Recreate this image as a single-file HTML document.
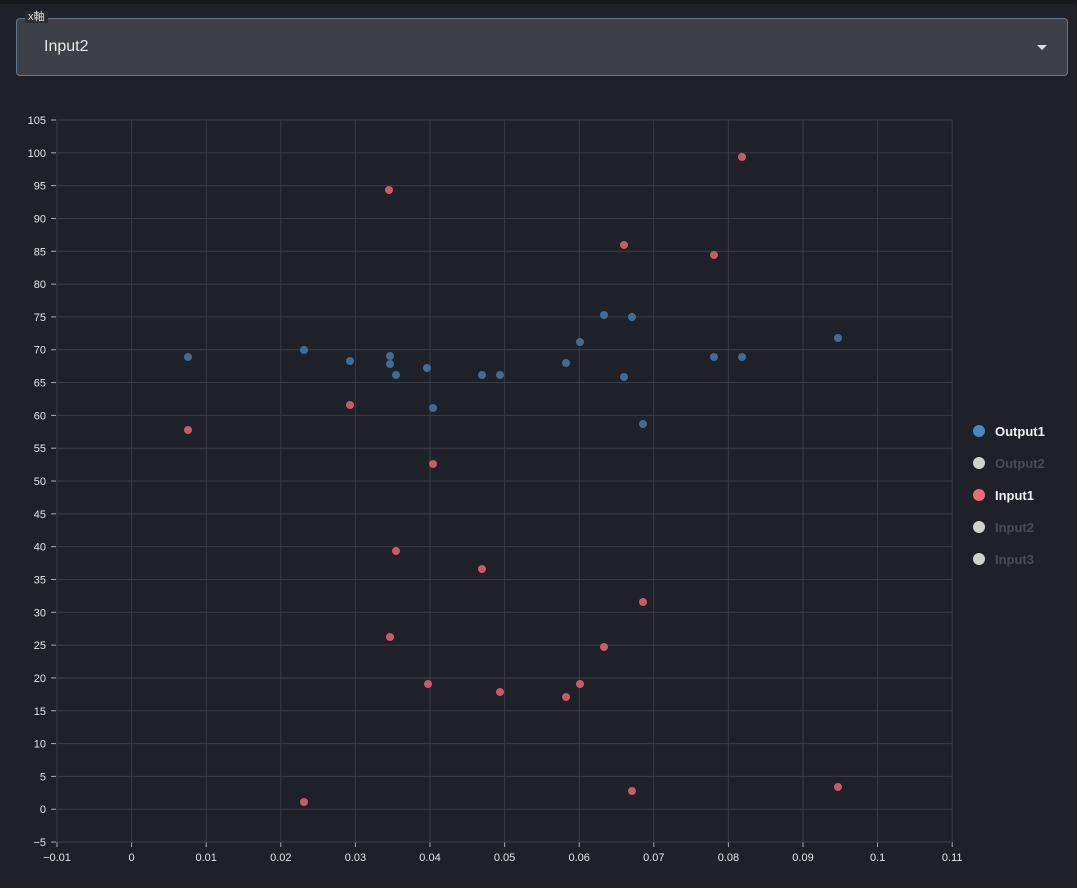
<!DOCTYPE html><html><head><meta charset="utf-8"><style>
body{margin:0;width:1077px;height:888px;background:#1f2129;overflow:hidden;font-family:"Liberation Sans","Noto Sans CJK JP",sans-serif}
.top{position:absolute;left:0;top:0;width:1077px;height:4px;background:#18191d}
.sel{position:absolute;left:16px;top:18px;width:1052px;height:58px;background:#3d4046;border:1px solid #5b7a9c;border-radius:4px;box-sizing:border-box}
.lab{position:absolute;left:25px;top:11px;font-size:11px;color:#ddd;background:#2a2c31;padding:0 3px;line-height:12px}
.val{position:absolute;left:27px;top:19px;font-size:16px;color:#e8e8e8}
.arr{position:absolute;right:20px;top:26px;width:0;height:0;border-left:5px solid transparent;border-right:5px solid transparent;border-top:5px solid #ddd}
</style></head><body><div class="top"></div>
<div class="sel"><div class="val">Input2</div><div class="arr"></div></div><div class="lab">x軸</div>
<svg width="1077" height="888" style="position:absolute;left:0;top:0" font-family="Liberation Sans, sans-serif" font-size="11" fill="#e6e6e6">
<g stroke="#383c46" stroke-width="1" id="g"></g>
<g id="t"></g>
<g id="p"></g>
<g font-size="13" font-weight="bold">
<circle cx="979" cy="431" r="6" fill="#4a86c0"/><text x="995" y="436" fill="#f0f0f0">Output1</text>
<circle cx="979" cy="463" r="6" fill="#d0d0d0"/><text x="995" y="468" fill="#4a4c52">Output2</text>
<circle cx="979" cy="495" r="6" fill="#f06b78"/><text x="995" y="500" fill="#f0f0f0">Input1</text>
<circle cx="979" cy="527" r="6" fill="#d0d0d0"/><text x="995" y="532" fill="#4a4c52">Input2</text>
<circle cx="979" cy="559" r="6" fill="#d0d0d0"/><text x="995" y="564" fill="#4a4c52">Input3</text>
</g>
</svg>
<script>
var ns="http://www.w3.org/2000/svg",g=document.getElementById('g'),t=document.getElementById('t'),p=document.getElementById('p');
function el(par,n,a,txt){var e=document.createElementNS(ns,n);for(var k in a)e.setAttribute(k,a[k]);if(txt!=null)e.textContent=txt;par.appendChild(e);}
for(var i=0;i<=12;i++){var x=57+i*74.6;el(g,'line',{x1:x,y1:120,x2:x,y2:842});el(g,'line',{x1:x,y1:842,x2:x,y2:847,stroke:'#aaa'});
var v=(-0.01+i*0.01);var s=i==1?'0':(Math.round(v*100)/100).toString();el(t,'text',{x:x,y:861,'text-anchor':'middle'},s.replace('-','−'));}
for(var j=0;j<=22;j++){var y=120+j*32.82;el(g,'line',{x1:57,y1:y,x2:952,y2:y});el(g,'line',{x1:51,y1:y,x2:56,y2:y,stroke:'#aaa'});
var v=105-j*5;el(t,'text',{x:46,y:y+4,'text-anchor':'end'},(v+'').replace('-','−'));}
var B=[[188,357],[304,350],[350,361],[390,356],[390,364],[396,375],[427,368],[433,408],[482,375],[500,375],[566,363],[580,342],[604,315],[632,317],[624,377],[643,424],[714,357],[742,357],[838,338]];
var R=[[188,430],[304,802],[350,405],[389,190],[390,637],[396,551],[428,684],[433,464],[482,569],[500,692],[566,697],[580,684],[604,647],[632,791],[624,245],[643,602],[714,255],[742,157],[838,787]];
B.forEach(function(a){el(p,'circle',{cx:a[0],cy:a[1],r:4,fill:'#3f6d98'});});
R.forEach(function(a){el(p,'circle',{cx:a[0],cy:a[1],r:4,fill:'#c95a66'});});
</script>
</body></html>
